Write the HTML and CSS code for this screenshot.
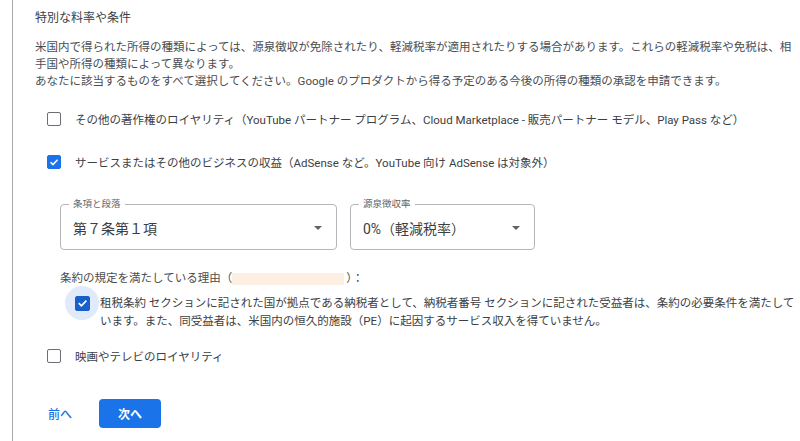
FILE: index.html
```html
<!DOCTYPE html>
<html lang="ja">
<head>
<meta charset="utf-8">
<link rel="stylesheet" href="styles.css">
</head>
<body>
<div class="panel">
  <div class="title">特別な料率や条件</div>
  <p class="desc">米国内で得られた所得の種類によっては、源泉徴収が免除されたり、軽減税率が適用されたりする場合があります。これらの軽減税率や免税は、相手国や所得の種類によって異なります。<br>あなたに該当するものをすべて選択してください。Google のプロダクトから得る予定のある今後の所得の種類の承認を申請できます。</p>

  <div class="row row-first">
    <span class="cb"></span>
    <span class="label">その他の著作権のロイヤリティ（YouTube パートナー プログラム、Cloud Marketplace - 販売パートナー モデル、Play Pass など）</span>
  </div>
  <div class="row row-second">
    <span class="cb checked"><svg viewBox="0 0 14 14" width="14" height="14"><path d="M3 7.2 L5.8 10 L11.2 4.4" fill="none" stroke="#fff" stroke-width="1.8"/></svg></span>
    <span class="label">サービスまたはその他のビジネスの収益（AdSense など。YouTube 向け AdSense は対象外）</span>
  </div>

  <div class="selects">
    <div class="select s1">
      <span class="flabel">条項と段落</span>
      <span class="value">第７条第１項</span>
      <span class="arrow"></span>
    </div>
    <div class="select s2">
      <span class="flabel">源泉徴収率</span>
      <span class="value">0%（軽減税率）</span>
      <span class="arrow"></span>
    </div>
  </div>

  <div class="reason">条約の規定を満たしている理由（<span class="blank"></span>）：</div>
  <div class="treaty">
    <span class="halo"><span class="cb checked dark"><svg viewBox="0 0 14 14" width="14" height="14"><path d="M3 7.2 L5.8 10 L11.2 4.4" fill="none" stroke="#fff" stroke-width="1.8"/></svg></span></span>
    <span class="ttext">租税条約 セクションに記された国が拠点である納税者として、納税者番号 セクションに記された受益者は、条約の必要条件を満たしています。また、同受益者は、米国内の恒久的施設（PE）に起因するサービス収入を得ていません。</span>
  </div>

  <div class="row row-movie">
    <span class="cb"></span>
    <span class="label">映画やテレビのロイヤリティ</span>
  </div>

  <div class="actions">
    <span class="prev">前へ</span>
    <span class="next">次へ</span>
  </div>
</div>
</body>
</html>
```
FILE: styles.css
```css
html, body {
  margin: 0;
  padding: 0;
  background: #fff;
}
body {
  font-family: Roboto, "Noto Sans CJK JP", sans-serif;
  color: #3c4043;
  width: 800px;
  height: 441px;
  overflow: hidden;
}
.panel {
  margin-left: 12px;
  border-left: 1.5px solid #a8a8a8;
  padding-left: 22px;
  padding-right: 4px;
  padding-top: 10px;
  height: 431px;
}
.title {
  font-size: 12px;
  line-height: 17px;
  color: #3c4043;
}
.desc {
  margin: 12px 0 0 0;
  font-size: 11.5px;
  line-height: 17px;
  color: #4a4d50;
}
.row {
  display: flex;
  align-items: center;
  height: 20px;
  padding-left: 12px;
}
.row-first { margin-top: 19px; }
.row-second { margin-top: 23px; }
.row-movie { margin-top: 16px; }
.cb {
  box-sizing: border-box;
  width: 14px;
  height: 14px;
  border: 1.6px solid #6b6e72;
  border-radius: 2px;
  display: inline-flex;
  align-items: center;
  justify-content: center;
  flex: none;
}
.cb.checked {
  background: #1a73e8;
  border-color: #1a73e8;
}
.cb.dark {
  width: 15px;
  height: 15px;
  background: #1a5fc8;
  border-color: #1a5fc8;
}
.cb svg { display: block; }
.label {
  margin-left: 14px;
  font-size: 11.5px;
  color: #3c4043;
  white-space: nowrap;
}
.selects {
  display: flex;
  gap: 13px;
  margin-top: 32px;
  padding-left: 25px;
}
.select {
  position: relative;
  box-sizing: border-box;
  height: 46px;
  border: 1px solid #b4b6b9;
  border-radius: 4px;
  display: flex;
  align-items: center;
  padding-left: 12px;
}
.s1 { width: 277px; }
.s2 { width: 185px; }
.flabel {
  position: absolute;
  top: -7px;
  left: 8px;
  padding: 0 4px;
  background: #fff;
  font-size: 9.5px;
  line-height: 12px;
  color: #5f6368;
}
.value {
  font-size: 14px;
  color: #3c4043;
  margin-top: 2px;
}
.arrow {
  position: absolute;
  right: 14px;
  top: 21px;
  width: 0;
  height: 0;
  border-left: 4.5px solid transparent;
  border-right: 4.5px solid transparent;
  border-top: 4.5px solid #5f6368;
}
.reason {
  margin-top: 20px;
  padding-left: 25px;
  font-size: 11.5px;
  line-height: 17px;
  color: #4a4d50;
  display: flex;
  align-items: center;
}
.blank {
  display: inline-block;
  width: 112px;
  height: 12px;
  background: #fdf0e2;
  margin: 0 2px 0 0;
}
.treaty {
  display: flex;
  align-items: flex-start;
  margin-top: 7px;
  padding-left: 30px;
}
.halo {
  width: 34px;
  height: 34px;
  border-radius: 50%;
  background: #e1eafa;
  display: flex;
  align-items: center;
  justify-content: center;
  margin-top: -8px;
  flex: none;
}
.ttext {
  margin-left: 1px;
  font-size: 11.5px;
  line-height: 18px;
  color: #3c4043;
}
.actions {
  display: flex;
  align-items: center;
  margin-top: 33px;
  padding-left: 13px;
}
.prev {
  font-size: 12px;
  font-weight: 500;
  color: #1a73e8;
  width: 51px;
}
.next {
  width: 62px;
  height: 29px;
  border-radius: 4px;
  background: #1a73e8;
  color: #fff;
  font-size: 12px;
  font-weight: 700;
  display: flex;
  align-items: center;
  justify-content: center;
}
```
